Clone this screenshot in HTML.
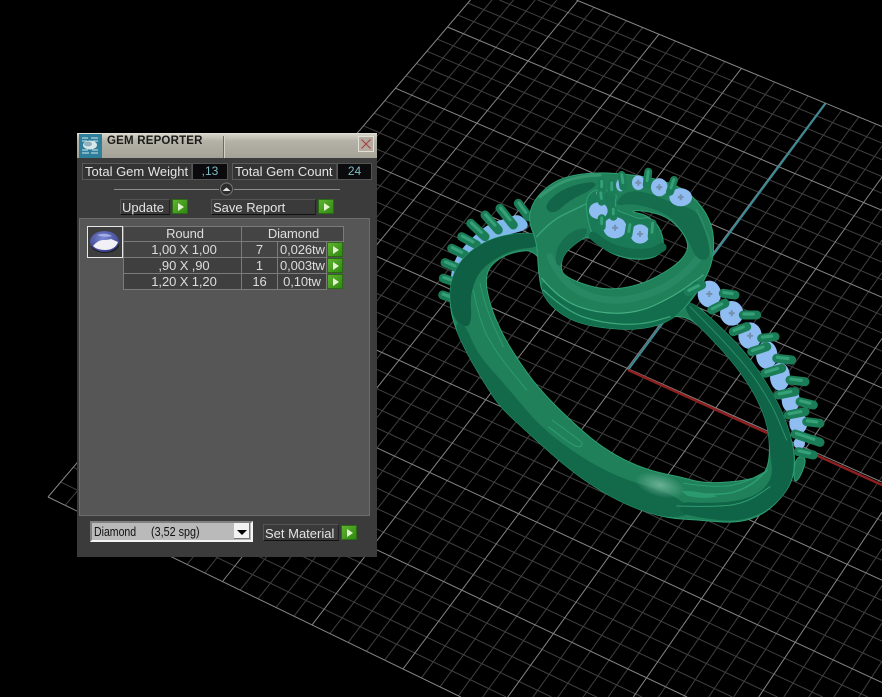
<!DOCTYPE html>
<html><head><meta charset="utf-8"><title>Gem Reporter</title>
<style>
html,body{margin:0;padding:0;background:#000;width:882px;height:697px;overflow:hidden}
#stage{position:absolute;left:0;top:0;width:882px;height:697px;background:#000;overflow:hidden}
svg{position:absolute;left:0;top:0}
.a{position:absolute;box-sizing:border-box;white-space:pre;font-family:"Liberation Sans",sans-serif}
.lbl{font-size:13px;color:#e4e4e4;line-height:15px}
.box{background:#333;border:1px solid #5a5a5a;border-right-color:#4a4a4a}
.val{background:#0b0b0d;border:1px solid #555;color:#7fbcc4;font-size:12px;line-height:14px;text-align:center}
.btnlbl{background:#3a3a3a;border:1px solid #222;border-left-color:#555;border-top-color:#555;border-bottom-color:#111}
.g{background:linear-gradient(135deg,#5fb22f,#2f8a12);border:1px solid #2a6a14;width:16px;height:15px}
.g:after{content:"";position:absolute;left:5px;top:3px;border-left:6px solid #e2f4cf;border-top:4px solid transparent;border-bottom:4px solid transparent}
.c{background:#444;border:1px solid #7b7b7b;color:#ddd;font-size:13px;letter-spacing:-.1px;line-height:14px;text-align:center}
</style></head><body>
<div id="stage">
<svg id="grid" width="882" height="697" viewBox="0 0 882 697"></svg>
<svg id="ring" width="882" height="697" viewBox="0 0 882 697">
<defs>
<radialGradient id="hl" cx=".5" cy=".5" r=".5"><stop offset="0" stop-color="#6ab095"/><stop offset="1" stop-color="#6ab095" stop-opacity="0"/></radialGradient>
<radialGradient id="gemt" cx=".45" cy=".35" r=".65"><stop offset="0" stop-color="#7a88d8"/><stop offset="1" stop-color="#3a3f88"/></radialGradient>
</defs>
<g id="gl"></g><g id="shank"></g><g id="swirl"></g><g id="gems"></g>
</svg>

<!-- panel -->
<div class="a" style="left:77px;top:133px;width:300px;height:424px;background:#3b3b3b"></div>
<div class="a" style="left:77px;top:133px;width:300px;height:25px;background:linear-gradient(#d6d4ca,#b4b2a6 30%,#a5a398);border-top:1px solid #e0dfd6"></div>
<div class="a" style="left:79px;top:134px;width:23px;height:24px;background:#2f7f9a"></div>
<svg width="882" height="697" viewBox="0 0 882 697" style="position:absolute;left:0;top:0">
<g stroke="#cfe8ee" stroke-width="1"><path d="M82 138h6M91 138h7M82 141h5M93 141h5M82 153h7M91 153h7M82 150h6M92 150h6"/></g>
<ellipse cx="90" cy="145" rx="7" ry="4.500" fill="#d8e8ea"/>
<ellipse cx="88" cy="144" rx="4" ry="2.500" fill="#8fb0c0"/>
<path d="M223.500 136V158" stroke="#6e6c62" stroke-width="1"/>
<path d="M224.500 136V158" stroke="#d4d2c8" stroke-width="1"/>
<rect x="358.500" y="136.500" width="15" height="15" fill="#b3aaa0" stroke="#e2ded6"/>
<path d="M361.500 139.500l9 9M370.500 139.500l-9 9" stroke="#a83a3a" stroke-width="1"/>
<path d="M114 189.500H219M234 189.500H340" stroke="#8d8d8d" stroke-width="1"/>
<circle cx="226.500" cy="189" r="6" fill="#2c2c2c" stroke="#777"/>
<path d="M222.500 191l4-3.500 4 3.500z" fill="#e8e8e8"/>
</svg>
<div class="a" style="left:107px;top:135px;font:bold 11.500px/13px 'Liberation Sans',sans-serif;color:#1a1a1a;letter-spacing:.2px">GEM REPORTER</div>

<div class="a box" style="left:82px;top:163px;width:110px;height:17px"></div>
<div class="a lbl" style="left:85px;top:164px">Total Gem Weight</div>
<div class="a val" style="left:192px;top:163px;width:36px;height:17px">,13</div>
<div class="a box" style="left:232px;top:163px;width:105px;height:17px"></div>
<div class="a lbl" style="left:235px;top:164px">Total Gem Count</div>
<div class="a val" style="left:337px;top:163px;width:35px;height:17px">24</div>

<div class="a btnlbl" style="left:120px;top:199px;width:50px;height:16px"></div>
<div class="a lbl" style="left:122px;top:200px">Update</div>
<div class="a g" style="left:172px;top:199px"></div>
<div class="a btnlbl" style="left:211px;top:199px;width:105px;height:16px"></div>
<div class="a lbl" style="left:213px;top:200px">Save Report</div>
<div class="a g" style="left:318px;top:199px"></div>

<div class="a" style="left:79px;top:218px;width:291px;height:298px;background:#565656;border:1px solid #6c6c6c"></div>

<div class="a" style="left:87px;top:226px;width:36px;height:32px;border:1px solid #e8e8e8;background:#3e3e3e"></div>
<svg width="882" height="697" viewBox="0 0 882 697" style="position:absolute;left:0;top:0">
<ellipse cx="105" cy="245" rx="14" ry="8" fill="#111" opacity=".7"/>
<ellipse cx="104.500" cy="241.500" rx="14.500" ry="10.500" fill="url(#gemt)"/>
<path d="M93 246q5-6 10-6t8-1l7 3q-3 8-13 8-8 0-12-4z" fill="#f0f0f6"/>
<path d="M97 235q8-3 15 1-8 2-15-1z" fill="#a4aee6"/>
</svg>

<div class="a c" style="left:123px;top:226px;width:119px;height:16px;padding-left:5px">Round</div>
<div class="a c" style="left:241px;top:226px;width:103px;height:16px;padding-left:2px">Diamond</div>

<div class="a c" style="left:123px;top:241px;width:119px;height:17px;line-height:15px;padding-left:3px">1,00 X 1,00</div>
<div class="a c" style="left:241px;top:241px;width:37px;height:17px;line-height:15px">7</div>
<div class="a c" style="left:277px;top:241px;width:50px;height:17px;line-height:15px;text-align:left;padding-left:2px">0,026tw</div>
<div class="a g" style="left:327px;top:242px"></div>

<div class="a c" style="left:123px;top:257px;width:119px;height:17px;line-height:15px;background:#3f3f3f;padding-left:3px">,90 X ,90</div>
<div class="a c" style="left:241px;top:257px;width:37px;height:17px;line-height:15px;background:#3f3f3f">1</div>
<div class="a c" style="left:277px;top:257px;width:50px;height:17px;line-height:15px;background:#3f3f3f;text-align:left;padding-left:2px">0,003tw</div>
<div class="a g" style="left:327px;top:258px"></div>

<div class="a c" style="left:123px;top:273px;width:119px;height:17px;line-height:15px;background:#3f3f3f;padding-left:3px">1,20 X 1,20</div>
<div class="a c" style="left:241px;top:273px;width:37px;height:17px;line-height:15px;background:#3f3f3f">16</div>
<div class="a c" style="left:277px;top:273px;width:50px;height:17px;line-height:15px;background:#3f3f3f">0,10tw</div>
<div class="a g" style="left:327px;top:274px"></div>

<div class="a" style="left:90px;top:521px;width:163px;height:21px;background:#bababa;border:2px solid #f4f4f4;border-top-color:#808080;border-left-color:#808080"></div>
<div class="a" style="left:94px;top:524px;font-size:13px;line-height:15px;color:#111;transform:scaleX(.81);transform-origin:0 0">Diamond</div>
<div class="a" style="left:151px;top:524px;font-size:13px;line-height:15px;color:#111;transform:scaleX(.83);transform-origin:0 0">(3,52 spg)</div>
<div class="a" style="left:234px;top:523px;width:16px;height:16px;background:#f2f2f2;border-right:1px solid #777;border-bottom:1px solid #777"></div>
<div class="a" style="left:237px;top:530px;border-top:5px solid #000;border-left:5px solid transparent;border-right:5px solid transparent"></div>

<div class="a btnlbl" style="left:263px;top:524px;width:76px;height:17px"></div>
<div class="a lbl" style="left:265px;top:526px">Set Material</div>
<div class="a g" style="left:341px;top:525px"></div>
</div>
<script>
(function(){
var NS="http://www.w3.org/2000/svg";
function el(p,n,o){var e=document.createElementNS(NS,n);for(var k in o)e.setAttribute(k,o[k]);p.appendChild(e);return e;}
var x0=48,y0=497,x1=403,y1=669,x2=825,y2=103,x3=498,y3=-32.5;
var dx1=x1-x2,dx2=x3-x2,sx=x0-x1+x2-x3,dy1=y1-y2,dy2=y3-y2,sy=y0-y1+y2-y3;
var D=dx1*dy2-dx2*dy1,G=(sx*dy2-dx2*sy)/D,H=(dx1*sy-sx*dy1)/D;
var A0=x1-x0+G*x1,B0=x3-x0+H*x3,C0=x0,E0=y1-y0+G*y1,F0=y3-y0+H*y3,I0=y0;
function P(u,v){var s=(u+4)/4,t=(v+4)/8,w=G*s+H*t+1;return [(A0*s+B0*t+C0)/w,(E0*s+F0*t+I0)/w];}
var g=document.getElementById("grid");
/* clip every line to the frame */
function clip(a,b){var t0=0,t1=1,dx=b[0]-a[0],dy=b[1]-a[1],pp=[-dx,dx,-dy,dy],qq=[a[0],882-a[0],a[1],697-a[1]];
 for(var k=0;k<4;k++){if(pp[k]===0){if(qq[k]<0)return null;}else{var r=qq[k]/pp[k];if(pp[k]<0){if(r>t1)return null;if(r>t0)t0=r;}else{if(r<t0)return null;if(r<t1)t1=r;}}}
 return [[a[0]+t0*dx,a[1]+t0*dy],[a[0]+t1*dx,a[1]+t1*dy]];}
function ln(a,b,c,w){var q=clip(a,b);if(!q)return;el(g,"line",{x1:q[0][0].toFixed(1),y1:q[0][1].toFixed(1),x2:q[1][0].toFixed(1),y2:q[1][1].toFixed(1),stroke:c,"stroke-width":w});}
var i;
for(i=-20;i<=20;i++){if(i%5){ln(P(i/5,-4),P(i/5,4),"#404040",1);ln(P(-4,i/5),P(4,i/5),"#404040",1);}}
for(i=-20;i<=20;i+=5){ln(P(i/5,-4),P(i/5,4),"#858585",1);ln(P(-4,i/5),P(4,i/5),"#858585",1);}
ln([628,370],[825.5,103.5],"#3a8a96",2);
ln([628,370],[882,485],"#8e1f1f",2.5);

/* midpoint-quadratic smoothing: never overshoots the control polygon */
function sm(p,closed){var n=p.length,d,i;
 function mid(a,b){return ((a[0]+b[0])/2).toFixed(1)+" "+((a[1]+b[1])/2).toFixed(1);}
 if(closed){d="M"+mid(p[n-1],p[0]);for(i=0;i<n;i++){d+="Q"+p[i][0]+" "+p[i][1]+" "+mid(p[i],p[(i+1)%n]);}return d+"Z";}
 d="M"+p[0][0]+" "+p[0][1];for(i=1;i<n-1;i++){d+="Q"+p[i][0]+" "+p[i][1]+" "+mid(p[i],p[i+1]);}
 return d+"L"+p[n-1][0]+" "+p[n-1][1];}
function Z(ox,oy){return function(p){return p.map(function(q){return [+(q[0]/3+ox).toFixed(1),+(q[1]/3+oy).toFixed(1)];});};}
var a=Z(530,160),b=Z(430,190),c=Z(480,370),d=Z(670,280);
var ED="#2f9e72";
function fillp(par,pts,col,st){var o={d:sm(pts,true),fill:col};if(st){o.stroke=st;o["stroke-width"]=1;}el(par,"path",o);}
function strk(par,pts,col,w,op){el(par,"path",{d:sm(pts,false),fill:"none",stroke:col,"stroke-width":w,"stroke-linecap":"round",opacity:op||1});}
function pr(par,p,q,w){var W=w||9;
 el(par,"line",{x1:p[0],y1:p[1],x2:q[0],y2:q[1],stroke:"#1b7d57","stroke-width":W,"stroke-linecap":"round"});
 var mx=p[0]+(q[0]-p[0])*.05,my=p[1]+(q[1]-p[1])*.05,nx=p[0]+(q[0]-p[0])*.75,ny=p[1]+(q[1]-p[1])*.75;
 el(par,"line",{x1:mx,y1:my-1,x2:nx,y2:ny-1,stroke:"#36a078","stroke-width":W*.35,"stroke-linecap":"round"});}
function gem(par,x,y,rx,ry,dots){el(par,"ellipse",{cx:x,cy:y,rx:rx,ry:ry,fill:"#8fbdf2"});
 if(dots){el(par,"path",{d:"M"+(x-3)+" "+y+"h6M"+x+" "+(y-3)+"v6",stroke:"#7490ae","stroke-width":2});}}

/* left gem row, behind shank */
var GL=document.getElementById("gl");
fillp(GL,b([[60,265],[75,205],[105,165],[140,130],[180,100],[230,85],[270,70],[305,115],[230,135],[170,155],[110,195],[70,260]]),"#7fb8ea");
[[[265,40],[295,80]],[[210,55],[250,105]],[[165,75],[205,120]],[[122,100],[165,140]],[[95,140],[140,165]],[[65,175],[105,195]],[[45,218],[85,235]],[[40,265],[75,277]],[[38,315],[65,325]]].forEach(function(s){var q=b(s);pr(GL,q[0],q[1],9);});

/* shank */
var S=document.getElementById("shank");
var outer=b([[330,130],[250,130],[170,150],[100,200],[65,260],[58,330],[70,400],[110,490],[170,590]])
 .concat(c([[60,110],[130,175],[240,275],[340,350],[450,410],[560,445]]))
 .concat(d([[90,720],[190,730],[270,710],[330,660],[370,600],[375,530],[365,480],[340,400],[285,300],[220,210],[140,130],[50,50]]))
 .concat([[650,312],[600,315],[550,290],[536,250]]);
var inner=b([[325,180],[250,185],[190,215],[165,260],[178,340],[215,430],[270,520],[330,600]])
 .concat(c([[270,150],[350,220],[430,270],[520,305],[600,320]]))
 .concat(d([[100,610],[200,605],[270,590],[290,570],[300,520],[295,440],[260,350],[200,260],[120,170],[45,100]]))
 .concat([[650,322],[600,322],[556,300]]);
el(S,"path",{d:sm(outer,true)+sm(inner,true),"fill-rule":"evenodd",fill:"#1f8059",stroke:ED,"stroke-width":1});
/* left dark top */
fillp(S,b([[330,130],[250,130],[170,150],[100,200],[65,260],[58,330],[75,395],[115,415],[125,380],[120,320],[140,255],[180,215],[250,178],[330,172]]),"#0e5f43");
/* lower dark strip */
fillp(S,b([[70,400],[110,490],[170,590]]).concat(c([[60,110],[130,175],[240,275],[340,350],[450,410],[560,445]])).concat(d([[60,705],[60,680]])).concat(c([[560,365],[420,325],[300,260],[180,170],[80,50]])).concat(b([[140,490],[105,400]])),"#126a4a");
strk(S,b([[130,300],[150,400],[200,490],[290,600]]),"#2c9a6e",1);
strk(S,b([[150,280],[165,350],[220,470]]),"#2c9a6e",1);
/* small rect detail */
el(S,"path",{d:sm(c([[215,150],[300,210],[310,225],[290,235],[205,170]]),false),fill:"none",stroke:"#2f9e72","stroke-width":1});
/* arm dark */
fillp(S,d([[50,52],[140,130],[220,210],[285,300],[340,400],[365,480],[372,530],[368,600],[330,660],[270,705],[190,725],[100,715],[30,700],[30,665],[100,670],[200,665],[270,640],[310,590],[300,520],[295,440],[260,350],[200,260],[120,170],[45,100]]),"#0f6347");
strk(S,d([[40,635],[150,650],[240,620],[292,570]]),"#2c9e72",1.5);
strk(S,d([[40,610],[150,625],[230,605],[285,575]]),"#2c9e72",1);
strk(S,d([[20,678],[150,682],[235,665],[300,620]]),"#2f9e72",1);
fillp(S,d([[40,630],[110,640],[150,650],[100,655],[45,648]]),"#2b9a6f");
fillp(S,d([[375,530],[412,530],[392,590],[370,612]]),"#1c7d58",ED);
strk(S,d([[60,80],[200,220],[300,360],[350,480]]),"#2a9068",1);
el(S,"ellipse",{cx:660,cy:485,rx:26,ry:12,fill:"url(#hl)",transform:"rotate(15 660 485)"});

/* swirl */
var W=document.getElementById("swirl");
var so=a([[22,270],[25,330],[35,400],[70,445],[130,485],[220,505],[320,510],[410,490],[470,440],[520,370],[550,300],[552,220],[530,160],[490,110],[440,75],[350,50],[260,40],[200,38],[130,45],[70,65],[20,110],[0,150],[-2,190],[15,230]]);
var sh=a([[92,320],[100,285],[130,255],[170,228],[195,245],[240,280],[300,298],[370,295],[398,270],[400,235],[385,195],[350,165],[300,155],[330,150],[400,165],[440,195],[470,235],[475,270],[450,305],[400,340],[340,370],[280,385],[220,388],[150,370],[100,345]]);
el(W,"path",{d:sm(so,true)+sm(sh,true),"fill-rule":"evenodd",fill:"#1f8059",stroke:ED,"stroke-width":1});
fillp(W,a([[35,355],[90,420],[200,460],[320,460],[430,410],[520,345],[470,440],[410,490],[320,510],[220,505],[130,485],[70,445],[35,400]]),"#136e4e");
strk(W,a([[35,355],[90,420],[200,460],[320,460],[430,410],[520,345]]),"#45ad80",1.2);
strk(W,a([[40,390],[110,455],[220,490],[330,495],[420,470]]),"#3ca678",1.2);
strk(W,a([[60,290],[90,355],[170,410],[270,425],[370,400],[450,355],[510,290]]),"#2a8a66",7,.8);
fillp(W,a([[258,125],[290,92],[350,95],[430,130],[500,150],[540,220],[540,300],[500,300],[475,240],[430,175],[370,145],[300,130],[265,138]]),"#166d4e");
strk(W,a([[500,150],[535,220],[545,290]]),"#2a8a66",2);
fillp(W,a([[92,320],[100,285],[130,255],[170,228],[172,200],[120,215],[80,260],[75,310]]),"#176f50");
fillp(W,a([[40,140],[90,90],[170,65],[205,70],[175,95],[120,120],[70,165]]),"#126549");
strk(W,a([[20,230],[60,185],[130,150],[172,130]]),"#35a079",1.5);
strk(W,a([[30,110],[80,70],[150,50],[210,45]]),"#35966f",3);
/* head */
var hb=a([[168,110],[170,165],[185,225],[225,270],[290,298],[365,298],[400,272],[400,235],[385,195],[355,170],[330,178],[300,165],[258,152],[255,125],[262,100],[200,85]]);
fillp(W,hb,"#1a7a58",ED);
strk(W,a([[190,228],[225,258],[290,280],[365,280],[396,262]]),"#136b4c",9);

/* gems & prongs on head, right row */
var Gm=document.getElementById("gems");
[[452,112,34,27,1],[388,82,25,27,1],[325,68,19,22,1],[272,75,14,19,0],[205,152,28,25,0],[255,203,35,32,1],[330,222,29,29,1]].forEach(function(q){var p=a([[q[0],q[1]]])[0];gem(Gm,p[0],p[1],q[2]/3,q[3]/3,q[4]);});
fillp(Gm,a([[195,95],[225,85],[225,105],[205,110]]),"#c8e0f4");
[[[275,45],[280,80]],[[355,35],[350,75]],[[432,60],[420,95]],[[215,65],[215,90]],[[245,70],[245,100]],[[212,100],[215,125]],[[215,175],[215,200]],[[250,150],[250,170]],[[300,195],[295,225]],[[368,190],[365,230]]].forEach(function(s){var q=a(s);pr(Gm,q[0],q[1],8);});

[[118,42,35,40,1],[185,100,35,37,1],[240,167,35,40,1],[290,225,32,42,0],[330,290,30,42,0],[362,360,27,37,0],[385,430,27,32,0],[388,490,17,17,0]].forEach(function(q){var p=d([[q[0],q[1]]])[0];gem(Gm,p[0],p[1],q[2]/3,q[3]/3,q[4]);});
[[[160,40],[195,45]],[[220,105],[260,105]],[[275,175],[315,170]],[[320,235],[365,240]],[[360,300],[405,305]],[[390,365],[430,375]],[[410,425],[450,430]]].forEach(function(s){var q=d(s);pr(Gm,q[0],q[1],9);});
[[[55,35],[95,15]],[[125,90],[165,70]],[[190,155],[230,140]],[[245,215],[290,200]],[[285,280],[335,265]],[[325,345],[375,335]],[[355,405],[405,395]],[[375,462],[450,487]],[[385,515],[430,525]]].forEach(function(s){var q=d(s);pr(Gm,q[0],q[1],9);});
})();
</script>
</body></html>
